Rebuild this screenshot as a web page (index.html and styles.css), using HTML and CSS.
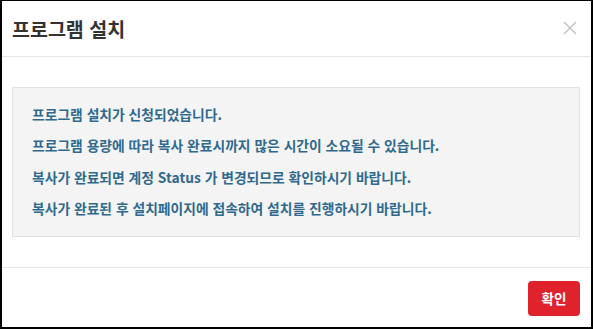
FILE: index.html
```html
<!DOCTYPE html>
<html lang="ko">
<head>
<meta charset="utf-8">
<title>프로그램 설치</title>
<link rel="stylesheet" href="styles.css">
</head>
<body>
<div class="modal">
  <div class="modal-header">
    <h4 class="modal-title">프로그램 설치</h4>
    <button class="close" type="button" aria-label="닫기">
      <svg width="14" height="14" viewBox="0 0 14 14"><path d="M1 1L13 13M13 1L1 13" stroke="#c4c4c4" stroke-width="1.5" fill="none"/></svg>
    </button>
  </div>
  <div class="modal-body">
    <div class="notice">
      <p>프로그램 설치가 신청되었습니다.</p>
      <p>프로그램 용량에 따라 복사 완료시까지 많은 시간이 소요될 수 있습니다.</p>
      <p>복사가 완료되면 계정 Status 가 변경되므로 확인하시기 바랍니다.</p>
      <p>복사가 완료된 후 설치페이지에 접속하여 설치를 진행하시기 바랍니다.</p>
    </div>
  </div>
  <div class="modal-footer">
    <button class="btn-confirm" type="button">확인</button>
  </div>
</div>
</body>
</html>
```
FILE: styles.css
```css
html, body {
  margin: 0;
  padding: 0;
  background: #fff;
}
body {
  font-family: "Noto Sans CJK KR", "Noto Sans", sans-serif;
}
.modal {
  box-sizing: border-box;
  width: 593px;
  height: 329px;
  border-top: 1px solid #000;
  border-left: 2px solid #000;
  border-right: 2px solid #000;
  border-bottom: 2px solid #000;
  background: #fff;
  display: flex;
  flex-direction: column;
}
.modal-header {
  height: 55px;
  border-bottom: 1px solid #e5e5e5;
  display: flex;
  align-items: center;
  justify-content: space-between;
  padding: 0 14px 0 10px;
}
.modal-title {
  margin: 0;
  font-size: 19.5px;
  font-weight: 700;
  color: #333;
}
.close {
  border: 0;
  background: none;
  padding: 0;
  margin-top: -1px;
  display: flex;
}
.modal-body {
  padding: 30px 11px 30px 10px;
}
.notice {
  background: #f4f4f4;
  border: 1px solid #e2e2e2;
  padding: 11px 19px 0 19px;
  height: 150px;
  box-sizing: border-box;
}
.notice p {
  margin: 0;
  font-size: 13.8px;
  font-weight: 700;
  line-height: 31.3px;
  color: #2f6a8e;
}
.modal-footer {
  border-top: 1px solid #e5e5e5;
  flex: 1;
  display: flex;
  justify-content: flex-end;
  align-items: center;
  padding: 0 11px 0 0;
}
.btn-confirm {
  width: 52px;
  height: 35px;
  border: 0;
  border-radius: 4px;
  background: #e0222c;
  color: #fff;
  font-family: "Noto Sans CJK KR", sans-serif;
  font-size: 13.5px;
  font-weight: 700;
  margin-top: 1px;
}
```
